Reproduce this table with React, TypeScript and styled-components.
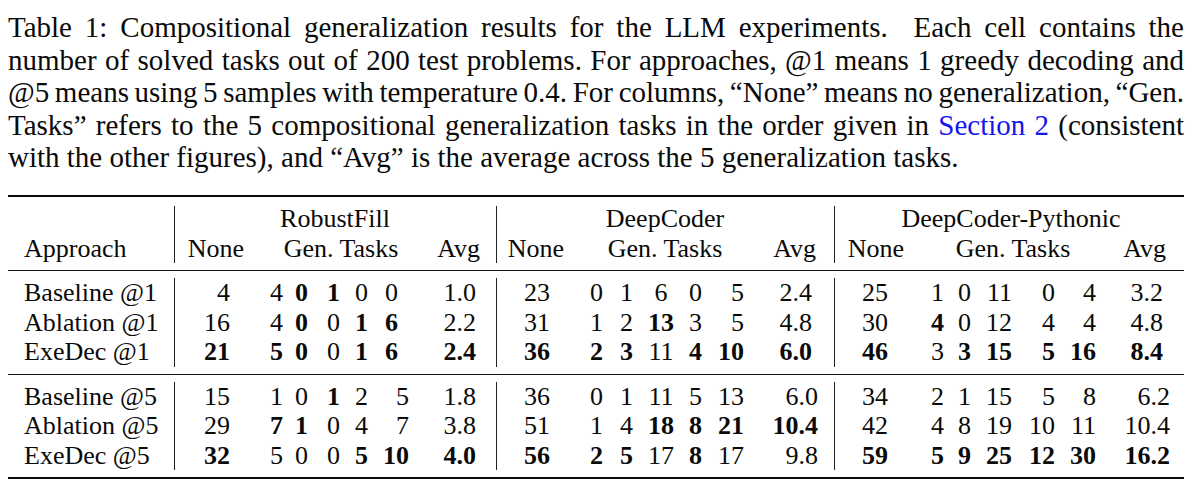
import styled, { createGlobalStyle } from "styled-components";

// ---------- Global Styles ----------
const GlobalStyle = createGlobalStyle`
  * { box-sizing: border-box; }
  body {
    margin: 0;
    background: #fff;
    color: #0a0a0a;
    font-family: "Liberation Serif", "Times New Roman", serif;
  }
`;

// ---------- types ----------
type Align = "left" | "right" | "center";
type Col = { w: number; align?: Align; pad?: number };
type Row = { label: string; groups: string[][] };

// ---------- styled-components ----------
const S = {
  Page: styled.div`
    width: 1176px;
    margin-left: 8px;
    padding-top: 11px;
  `,
  Caption: styled.div`
    font-size: 29px;
    line-height: 32.5px;
  `,
  CaptionLine: styled.div<{ $last?: boolean; $tight?: boolean }>`
    text-align: justify;
    text-align-last: ${(p) => (p.$last ? "left" : "justify")};
    word-spacing: ${(p) => (p.$tight ? "-2.5px" : "normal")};
  `,
  Link: styled.span`
    color: #1616ee;
  `,
  Table: styled.div`
    margin-top: 21.5px;
    border-top: 2px solid #0a0a0a;
    border-bottom: 2px solid #0a0a0a;
    font-size: 26px;
  `,
  Section: styled.div<{ $cols: string }>`
    display: grid;
    grid-template-columns: ${(p) => p.$cols};
    grid-auto-rows: 29.5px;
    line-height: 29.5px;
    padding: 7px 0;
    & + & {
      border-top: 1px solid #111;
    }
  `,
  Bar: styled.div<{ $col: number; $rows: number; $top?: number }>`
    grid-column: ${(p) => p.$col};
    grid-row: 1 / span ${(p) => p.$rows};
    justify-self: center;
    width: 1px;
    margin-top: ${(p) => p.$top ?? 0}px;
    background: #222;
  `,
  Label: styled.div`
    padding-left: 16px;
    white-space: nowrap;
  `,
  Head: styled.div<{ $align?: Align; $pad?: number; $span?: number; $indent?: number }>`
    grid-column: span ${(p) => p.$span ?? 1};
    text-align: ${(p) => p.$align ?? "center"};
    padding-right: ${(p) => p.$pad ?? 0}px;
    padding-left: ${(p) => p.$indent ?? 0}px;
    white-space: nowrap;
  `,
  Cell: styled.div<{ $align?: Align; $pad?: number; $bold?: boolean }>`
    text-align: ${(p) => p.$align ?? "right"};
    padding-right: ${(p) => p.$pad ?? 0}px;
    font-weight: ${(p) => (p.$bold ? 700 : 400)};
    white-space: nowrap;
  `,
};

// ---------- data ----------
const HEAD_COLS = "162px 8px 76px 174px 64px 8px 72px 186px 72px 8px 76px 198px 72px";
const GROUPS = ["RobustFill", "DeepCoder", "DeepCoder-Pythonic"];
const AVG_HEAD_PAD = [12, 14, 18];

const TOP_COLS: Col[][] = [
  [{ w: 52 }, { w: 53 }, { w: 25 }, { w: 32 }, { w: 28 }, { w: 30 }, { w: 94, pad: 16 }],
  [{ w: 50 }, { w: 53 }, { w: 30 }, { w: 56, align: "center" }, { w: 13 }, { w: 42 }, { w: 86, pad: 18 }],
  [{ w: 50 }, { w: 56 }, { w: 27 }, { w: 41 }, { w: 43 }, { w: 41 }, { w: 88, pad: 21 }],
];

const BOTTOM_COLS: Col[][] = [
  [{ w: 52 }, { w: 53 }, { w: 25 }, { w: 32 }, { w: 28 }, { w: 41 }, { w: 83, pad: 16 }],
  [{ w: 50 }, { w: 53 }, { w: 30 }, { w: 56, align: "center" }, { w: 13 }, { w: 42 }, { w: 86, pad: 12 }],
  [{ w: 50 }, { w: 56 }, { w: 27 }, { w: 41 }, { w: 43 }, { w: 41 }, { w: 88, pad: 14 }],
];

// "*" marks a bold entry
const TOP_ROWS: Row[] = [
  {
    label: "Baseline @1",
    groups: [
      ["4", "4", "*0", "*1", "0", "0", "1.0"],
      ["23", "0", "1", "6", "0", "5", "2.4"],
      ["25", "1", "0", "11", "0", "4", "3.2"],
    ],
  },
  {
    label: "Ablation @1",
    groups: [
      ["16", "4", "*0", "0", "*1", "*6", "2.2"],
      ["31", "1", "2", "*13", "3", "5", "4.8"],
      ["30", "*4", "0", "12", "4", "4", "4.8"],
    ],
  },
  {
    label: "ExeDec @1",
    groups: [
      ["*21", "*5", "*0", "0", "*1", "*6", "*2.4"],
      ["*36", "*2", "*3", "11", "*4", "*10", "*6.0"],
      ["*46", "3", "*3", "*15", "*5", "*16", "*8.4"],
    ],
  },
];

const BOTTOM_ROWS: Row[] = [
  {
    label: "Baseline @5",
    groups: [
      ["15", "1", "0", "*1", "2", "5", "1.8"],
      ["36", "0", "1", "11", "5", "13", "6.0"],
      ["34", "2", "1", "15", "5", "8", "6.2"],
    ],
  },
  {
    label: "Ablation @5",
    groups: [
      ["29", "*7", "*1", "0", "4", "7", "3.8"],
      ["51", "1", "4", "*18", "*8", "*21", "*10.4"],
      ["42", "4", "8", "19", "10", "11", "10.4"],
    ],
  },
  {
    label: "ExeDec @5",
    groups: [
      ["*32", "5", "0", "0", "*5", "*10", "*4.0"],
      ["*56", "*2", "*5", "17", "*8", "17", "9.8"],
      ["*59", "*5", "*9", "*25", "*12", "*30", "*16.2"],
    ],
  },
];

// ---------- helpers ----------
const template = (cols: Col[][]) =>
  "162px " + cols.map((g) => "8px " + g.map((c) => `${c.w}px`).join(" ")).join(" ");

// grid column of each vertical bar (1-based)
const barCols = (cols: Col[][]) => {
  let at = 2;
  return cols.map((g) => {
    const c = at;
    at += g.length + 1;
    return c;
  });
};

function Body({ cols, rows }: { cols: Col[][]; rows: Row[] }) {
  return (
    <S.Section $cols={template(cols)}>
      {barCols(cols).map((c) => (
        <S.Bar key={c} $col={c} $rows={rows.length} />
      ))}
      {rows.map((r) => [
        <S.Label key={r.label}>{r.label}</S.Label>,
        ...r.groups.flatMap((g, gi) =>
          g.map((v, ci) => {
            const col = cols[gi][ci];
            const bold = v.startsWith("*");
            return (
              <S.Cell
                key={`${r.label}-${gi}-${ci}`}
                $align={col.align}
                $pad={col.pad}
                $bold={bold}
              >
                {bold ? v.slice(1) : v}
              </S.Cell>
            );
          })
        ),
      ])}
    </S.Section>
  );
}

// ---------- component ----------
export default function App() {
  return (
    <>
      <GlobalStyle />
      <S.Page>
        <S.Caption>
          <S.CaptionLine>
            Table 1: Compositional generalization results for the LLM experiments.{"\u00a0"} Each cell contains the
          </S.CaptionLine>
          <S.CaptionLine>
            number of solved tasks out of 200 test problems. For approaches, @1 means 1 greedy decoding and
          </S.CaptionLine>
          <S.CaptionLine $tight>
            @5 means using 5 samples with temperature 0.4. For columns, “None” means no generalization, “Gen.
          </S.CaptionLine>
          <S.CaptionLine>
            Tasks” refers to the 5 compositional generalization tasks in the order given in{" "}
            <S.Link>Section 2</S.Link> (consistent
          </S.CaptionLine>
          <S.CaptionLine $last>
            with the other figures), and “Avg” is the average across the 5 generalization tasks.
          </S.CaptionLine>
        </S.Caption>

        <S.Table>
          <S.Section $cols={HEAD_COLS}>
            {[2, 6, 10].map((c) => (
              <S.Bar key={c} $col={c} $rows={2} $top={2} />
            ))}
            <S.Head />
            {GROUPS.map((g) => (
              <S.Head key={g} $span={3}>
                {g}
              </S.Head>
            ))}
            <S.Head $align="left" $indent={16}>
              Approach
            </S.Head>
            {GROUPS.flatMap((g, i) => [
              <S.Head key={`${g}-none`}>None</S.Head>,
              <S.Head key={`${g}-gen`}>Gen. Tasks</S.Head>,
              <S.Head key={`${g}-avg`} $align="right" $pad={AVG_HEAD_PAD[i]}>
                Avg
              </S.Head>,
            ])}
          </S.Section>
          <Body cols={TOP_COLS} rows={TOP_ROWS} />
          <Body cols={BOTTOM_COLS} rows={BOTTOM_ROWS} />
        </S.Table>
      </S.Page>
    </>
  );
}
